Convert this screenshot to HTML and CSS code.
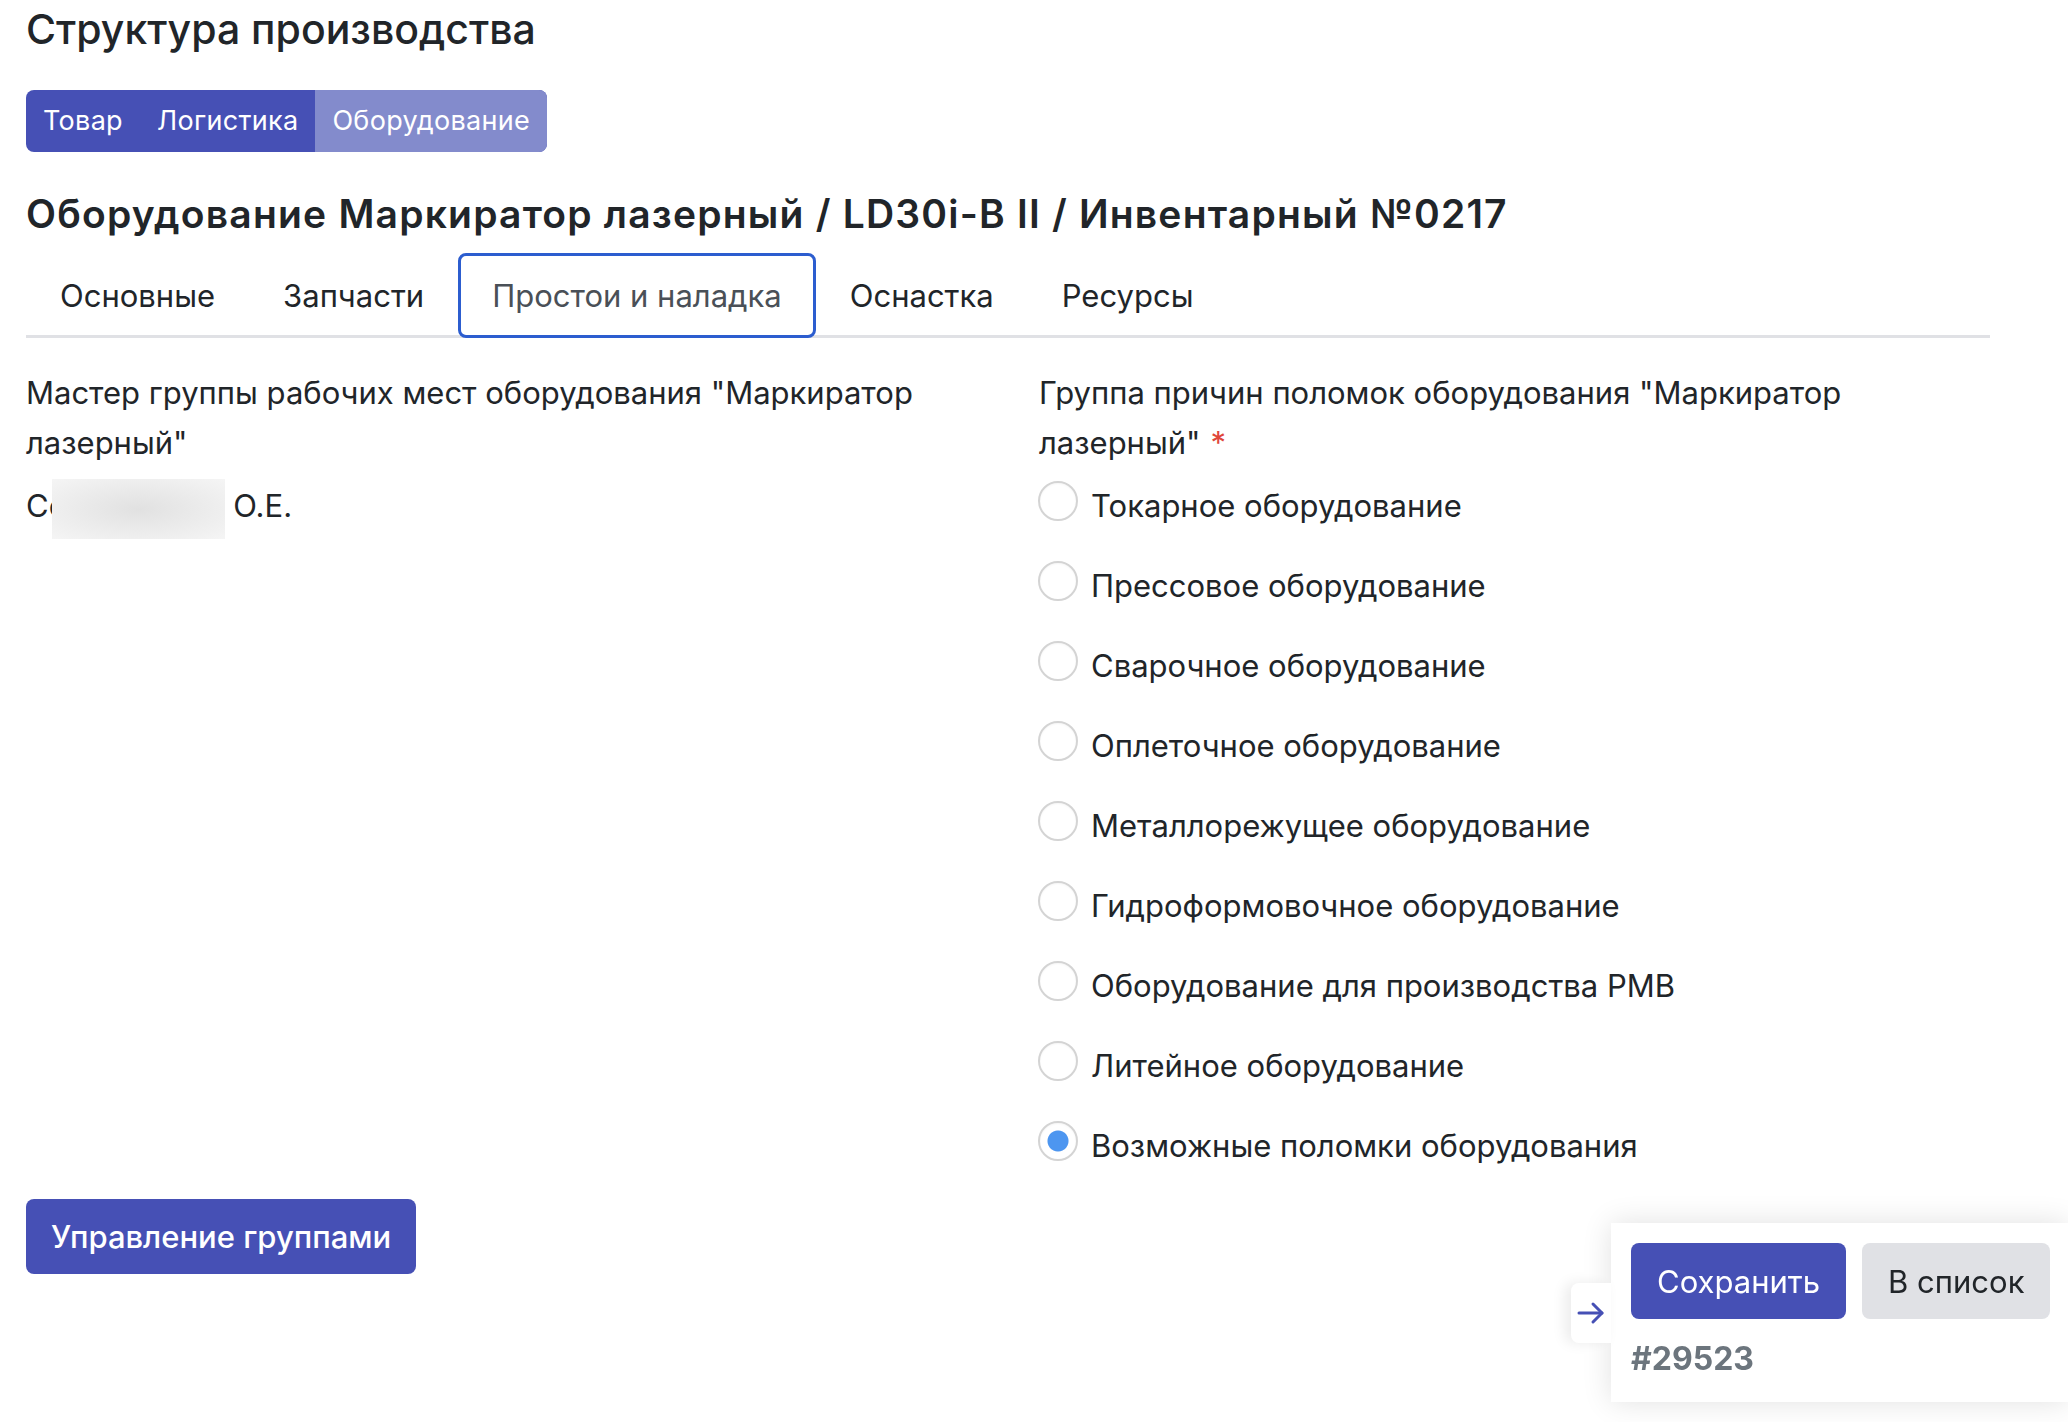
FILE: index.html
```html
<!DOCTYPE html>
<html lang="ru">
<head>
    <meta charset="UTF-8">
    <meta name="viewport" content="width=device-width, initial-scale=1.0">
    <title>Структура производства</title>
    <link rel="stylesheet" href="styles.css">
</head>
<body>
    <div class="page">
        <h1 class="page-title">Структура производства</h1>

        <div class="section-switch">
            <a class="switch-item" href="#">Товар</a>
            <a class="switch-item" href="#">Логистика</a>
            <a class="switch-item current" href="#">Оборудование</a>
        </div>

        <h2 class="item-title">Оборудование Маркиратор лазерный / LD30i-B II / Инвентарный №0217</h2>

        <nav class="tabs">
            <a class="tab" href="#">Основные</a>
            <a class="tab" href="#">Запчасти</a>
            <a class="tab active" href="#">Простои и наладка</a>
            <a class="tab" href="#">Оснастка</a>
            <a class="tab" href="#">Ресурсы</a>
        </nav>

        <div class="columns">
            <div class="field">
                <div class="field-label">Мастер группы рабочих мест оборудования "Маркиратор лазерный"</div>
                <div class="person">
                    <span>Со</span>
                    <span class="hidden-name"></span>
                    <span class="initials">О.Е.</span>
                </div>
            </div>

            <div class="field">
                <div class="field-label">Группа причин поломок оборудования "Маркиратор лазерный"<span class="required">*</span></div>
                <div class="radio-list">
                    <label class="radio-row"><input type="radio" name="group"><span>Токарное оборудование</span></label>
                    <label class="radio-row"><input type="radio" name="group"><span>Прессовое оборудование</span></label>
                    <label class="radio-row"><input type="radio" name="group"><span>Сварочное оборудование</span></label>
                    <label class="radio-row"><input type="radio" name="group"><span>Оплеточное оборудование</span></label>
                    <label class="radio-row"><input type="radio" name="group"><span>Металлорежущее оборудование</span></label>
                    <label class="radio-row"><input type="radio" name="group"><span>Гидроформовочное оборудование</span></label>
                    <label class="radio-row"><input type="radio" name="group"><span>Оборудование для производства РМВ</span></label>
                    <label class="radio-row"><input type="radio" name="group"><span>Литейное оборудование</span></label>
                    <label class="radio-row"><input type="radio" name="group" checked><span>Возможные поломки оборудования</span></label>
                </div>
            </div>
        </div>

        <button class="btn btn-primary">Управление группами</button>
    </div>

    <div class="save-panel">
        <button class="panel-toggle" title="Свернуть">
            <svg width="30" height="24" viewBox="0 0 30 24" fill="none" stroke="#4650b5" stroke-width="3" stroke-linecap="round" stroke-linejoin="round">
                <path d="M3 12h23"/>
                <path d="M17 3l9 9-9 9"/>
            </svg>
        </button>
        <div class="panel-buttons">
            <button class="btn btn-primary btn-save">Сохранить</button>
            <button class="btn btn-light">В список</button>
        </div>
        <div class="record-id">#29523</div>
    </div>
</body>
</html>
```

FILE: styles.css
```css
body {
    margin: 0;
    font-family: Inter, "Noto Sans", sans-serif;
    color: #212529;
    background: #fff;
}

.page {
    padding: 5px 78px 40px 26px;
}

.page-title {
    margin: 0;
    font-size: 41px;
    line-height: 48px;
    font-weight: 500;
}

/* top switch between sections */
.section-switch {
    display: inline-flex;
    margin-top: 37px;
    border-radius: 8px;
    overflow: hidden;
    background-color: #4650b5;
}
.switch-item {
    padding: 11px 17px;
    font-size: 27px;
    line-height: 40px;
    letter-spacing: 0.3px;
    color: #fff;
    text-decoration: none;
}
.switch-item.current {
    background-color: #838bcc;
}

.item-title {
    margin: 40px 0 0;
    font-size: 39px;
    line-height: 43px;
    font-weight: 600;
    letter-spacing: 1.2px;
}

/* tabs */
.tabs {
    display: flex;
    margin-top: 18px;
    border-bottom: 3px solid #e0e1e5;
}
.tab {
    padding: 17px 31px;
    margin-bottom: -3px;
    border: 3px solid transparent;
    border-radius: 8px;
    font-size: 31px;
    line-height: 45px;
    color: #212529;
    text-decoration: none;
}
.tab.active {
    border-color: #2c5dcf;
    color: #4a5057;
    background: #fff;
}

/* form columns */
.columns {
    display: grid;
    grid-template-columns: 1fr 1fr;
    column-gap: 62px;
    margin-top: 30px;
}
.field-label {
    font-size: 31px;
    line-height: 50px;
    margin-bottom: 11px;
}
.required {
    margin-left: 10px;
    color: #e0463a;
}

.person {
    display: flex;
    align-items: flex-start;
    font-size: 31px;
    line-height: 53px;
}
.hidden-name {
    width: 173px;
    height: 60px;
    margin-left: -15px;
    background: radial-gradient(ellipse at center, #e1e1e1 0%, #ebebeb 50%, #f5f5f5 100%);
}
.initials {
    margin-left: 8px;
}

.radio-row {
    display: flex;
    align-items: flex-start;
    margin-bottom: 27px;
    font-size: 31px;
    line-height: 53px;
    cursor: pointer;
}
.radio-row input {
    appearance: none;
    -webkit-appearance: none;
    flex: none;
    width: 40px;
    height: 40px;
    margin: 2px 13px 0 -1px;
    border: 2px solid #d4d4d4;
    border-radius: 50%;
    background: #fff;
    box-shadow: inset 0 1px 2px rgba(0, 0, 0, 0.04);
}
.radio-row input:checked {
    background: radial-gradient(circle, #4d96f0 0, #4d96f0 10px, #fff 11px);
}

/* buttons */
.btn {
    display: inline-block;
    padding: 15px 25px;
    border: none;
    border-radius: 8px;
    font-family: inherit;
    font-size: 31px;
    line-height: 45px;
    cursor: pointer;
}
.btn-primary {
    background-color: #4650b5;
    color: #fff;
    font-weight: 500;
}
.btn-light {
    background-color: #e0e1e5;
    color: #212529;
}

/* floating save panel */
.save-panel {
    position: fixed;
    right: 0;
    bottom: 20px;
    width: 437px;
    padding: 20px 0 24px 20px;
    background: #fff;
    box-shadow: 0 0 28px rgba(0, 0, 0, 0.12);
}
.panel-toggle {
    position: absolute;
    left: -40px;
    top: 60px;
    width: 40px;
    height: 60px;
    padding: 0;
    border: none;
    border-radius: 8px 0 0 8px;
    background: #fff;
    box-shadow: -6px 0 14px rgba(0, 0, 0, 0.08);
    display: flex;
    align-items: center;
    justify-content: center;
}
.panel-buttons {
    display: flex;
    gap: 16px;
}
.btn-save {
    padding: 16px 26px 15px;
    font-weight: 400;
}
.panel-buttons .btn-light {
    padding: 16px 26px 15px;
}
.record-id {
    margin-top: 21px;
    font-size: 32px;
    line-height: 38px;
    font-weight: 700;
    color: #6c757d;
}
```
